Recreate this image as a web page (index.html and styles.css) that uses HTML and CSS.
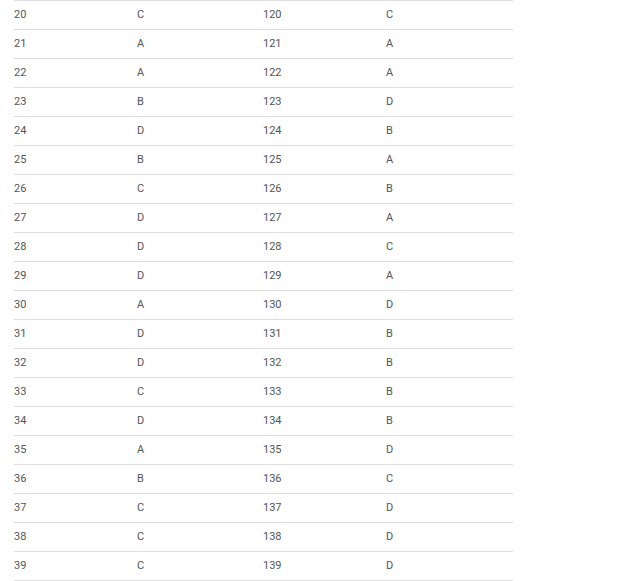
FILE: index.html
```html
<!DOCTYPE html>
<html>
<head>
<meta charset="utf-8">
<link rel="stylesheet" href="styles.css">
</head>
<body>
<table class="answers">
<colgroup><col class="c1"><col class="c2"><col class="c3"><col class="c4"></colgroup>
<tbody>
<tr><td>20</td><td>C</td><td>120</td><td>C</td></tr>
<tr><td>21</td><td>A</td><td>121</td><td>A</td></tr>
<tr><td>22</td><td>A</td><td>122</td><td>A</td></tr>
<tr><td>23</td><td>B</td><td>123</td><td>D</td></tr>
<tr><td>24</td><td>D</td><td>124</td><td>B</td></tr>
<tr><td>25</td><td>B</td><td>125</td><td>A</td></tr>
<tr><td>26</td><td>C</td><td>126</td><td>B</td></tr>
<tr><td>27</td><td>D</td><td>127</td><td>A</td></tr>
<tr><td>28</td><td>D</td><td>128</td><td>C</td></tr>
<tr><td>29</td><td>D</td><td>129</td><td>A</td></tr>
<tr><td>30</td><td>A</td><td>130</td><td>D</td></tr>
<tr><td>31</td><td>D</td><td>131</td><td>B</td></tr>
<tr><td>32</td><td>D</td><td>132</td><td>B</td></tr>
<tr><td>33</td><td>C</td><td>133</td><td>B</td></tr>
<tr><td>34</td><td>D</td><td>134</td><td>B</td></tr>
<tr><td>35</td><td>A</td><td>135</td><td>D</td></tr>
<tr><td>36</td><td>B</td><td>136</td><td>C</td></tr>
<tr><td>37</td><td>C</td><td>137</td><td>D</td></tr>
<tr><td>38</td><td>C</td><td>138</td><td>D</td></tr>
<tr><td>39</td><td>C</td><td>139</td><td>D</td></tr>
</tbody>
</table>
</body>
</html>
```
FILE: styles.css
```css
html, body {
  margin: 0;
  padding: 0;
  background: #fff;
}
body {
  padding-left: 14px;
  font-family: Roboto, "Liberation Sans", sans-serif;
  font-size: 11px;
  color: #555;
}
.answers {
  border-collapse: collapse;
  table-layout: fixed;
  width: 499px;
}
.c1 { width: 123px; }
.c2 { width: 126px; }
.c3 { width: 123px; }
.c4 { width: 127px; }
.answers td {
  padding: 0;
  height: 28px;
  line-height: 28px;
  border-top: 1px solid #dedede;
  border-bottom: 1px solid #dedede;
  vertical-align: middle;
}
```
